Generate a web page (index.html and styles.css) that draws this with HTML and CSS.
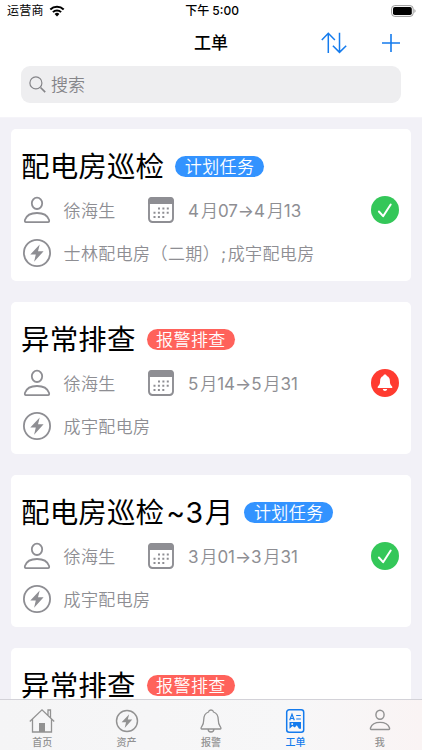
FILE: index.html
```html
<!DOCTYPE html>
<html lang="zh-CN">
<head>
<meta charset="utf-8">
<title>工单</title>
<link rel="stylesheet" href="styles.css">
</head>
<body>
<svg class="sprite" aria-hidden="true">
  <symbol id="person" viewBox="0 0 28 28"><g fill="none" stroke="currentColor" stroke-width="1.8"><ellipse cx="14" cy="7.3" rx="5.2" ry="5.7"/><path d="M3 26.1C1.8 26.1 1.6 25 2 23.8C3.4 19.8 8 17 14 17S24.6 19.8 26 23.8C26.400 25 26.200 26.100 25 26.100Z"/></g></symbol>
  <symbol id="calendar" viewBox="0 0 28 28"><rect x="2" y="2" width="24" height="24" rx="3.400" fill="none" stroke="currentColor" stroke-width="1.900"/><path d="M1.100 8V4.500Q1.100 1.100 5 1.100H23Q26.900 1.100 26.900 4.500V8Z" fill="currentColor"/><path d="M11 12.500H23M6.500 16.800H23M6.500 21.100H18.500" fill="none" stroke="currentColor" stroke-width="2" stroke-dasharray="2 2.400"/></symbol>
  <symbol id="bolt" viewBox="0 0 30 30"><circle cx="15" cy="15" r="13.100" fill="none" stroke="currentColor" stroke-width="1.800"/><path d="M17.700 6.500L8.300 16.500H13.800L12.100 23.800L21.600 13.200H16Z" fill="currentColor"/></symbol>
  <symbol id="check" viewBox="0 0 28 28"><circle cx="14" cy="14" r="14" fill="#34c759"/><path d="M7.900 15.500L12.100 20.200L19.700 8.500" fill="none" stroke="#fff" stroke-width="2" stroke-linecap="round" stroke-linejoin="round"/></symbol>
  <symbol id="alert" viewBox="0 0 28 28"><circle cx="14" cy="14" r="14" fill="#ff3b30"/><path d="M14 5.500C15.200 5.500 15.700 6.200 15.800 7C18 7.800 18.900 9.600 18.900 12C18.900 15.200 19.600 15.900 20.900 17.200C21.800 18.200 21.400 19 20.400 19H7.600C6.600 19 6.200 18.200 7.100 17.200C8.400 15.900 9.100 15.200 9.100 12C9.100 9.600 10 7.800 12.200 7C12.300 6.200 12.800 5.500 14 5.500ZM11.800 20H16.200C16 21.300 15.100 22 14 22S12 21.300 11.800 20Z" fill="#fff"/></symbol>
</svg>
<div class="screen">
  <header class="top">
    <div class="status">
      <div class="carrier"><span>运营商</span>
        <svg width="16" height="12" viewBox="0 0 16 12"><path d="M1.300 4.500A9.500 9.500 0 0 1 14.700 4.500M3.900 7.100A5.900 5.900 0 0 1 12.100 7.100" fill="none" stroke="#000" stroke-width="2"/><path d="M8 11.500L5.600 9A3.400 3.400 0 0 1 10.400 9Z"/></svg>
      </div>
      <span class="time">下午 5:00</span>
      <svg class="battery" width="26" height="12" viewBox="0 0 26 12"><rect x=".6" y=".6" width="21.600" height="10.800" rx="3.200" fill="none" stroke="#9a9a9a"/><rect x="2" y="2" width="18.800" height="8" rx="1.800"/><path d="M23.500 4Q25.500 6 23.500 8Z" fill="#888"/></svg>
    </div>
    <div class="nav">
      <h1>工单</h1>
      <div class="actions">
        <svg width="26" height="22" viewBox="0 0 26 22"><path d="M7.300 21V1.300M.8 8L7.300 1.300L13.900 8M18.500 .7V20.400M11.900 13.700L18.500 20.400L25.200 13.700" fill="none" stroke="currentColor" stroke-width="1.500"/></svg>
        <svg width="18" height="18" viewBox="0 0 18 18"><path d="M9 0V18M0 9H18" fill="none" stroke="currentColor" stroke-width="1.600"/></svg>
      </div>
    </div>
    <div class="search">
      <svg width="17" height="17" viewBox="0 0 17 17"><path d="M11.500 11.500L16.200 16.200" fill="none" stroke="currentColor" stroke-width="1.700"/><circle cx="6.900" cy="6.900" r="6" fill="none" stroke="currentColor" stroke-width="1.200"/></svg>
      <span>搜索</span>
    </div>
  </header>

  <main class="list">
    <article class="card">
      <div class="heading"><h2>配电房巡检</h2><span class="tag plan">计划任务</span></div>
      <div class="row"><svg class="icon"><use href="#person"/></svg><span class="name">徐海生</span><svg class="icon"><use href="#calendar"/></svg><span class="date">4<i>月</i>07→4<i>月</i>13</span><svg class="state"><use href="#check"/></svg></div>
      <div class="row"><svg class="icon power"><use href="#bolt"/></svg><span>士林配电房（二期）<b>;</b>成宇配电房</span></div>
    </article>
    <article class="card">
      <div class="heading"><h2>异常排查</h2><span class="tag alarm">报警排查</span></div>
      <div class="row"><svg class="icon"><use href="#person"/></svg><span class="name">徐海生</span><svg class="icon"><use href="#calendar"/></svg><span class="date">5<i>月</i>14→5<i>月</i>31</span><svg class="state"><use href="#alert"/></svg></div>
      <div class="row"><svg class="icon power"><use href="#bolt"/></svg><span>成宇配电房</span></div>
    </article>
    <article class="card">
      <div class="heading"><h2>配电房巡检<span class="latin">~3</span>月</h2><span class="tag plan">计划任务</span></div>
      <div class="row"><svg class="icon"><use href="#person"/></svg><span class="name">徐海生</span><svg class="icon"><use href="#calendar"/></svg><span class="date">3<i>月</i>01→3<i>月</i>31</span><svg class="state"><use href="#check"/></svg></div>
      <div class="row"><svg class="icon power"><use href="#bolt"/></svg><span>成宇配电房</span></div>
    </article>
    <article class="card">
      <div class="heading"><h2>异常排查</h2><span class="tag alarm">报警排查</span></div>
    </article>
  </main>

  <nav class="tabs">
    <div class="tab"><svg viewBox="0 0 26 26"><path d="M.8 13.500L13 1.800L25.200 13.500M3.500 11V24H22.500V11M19 7.500V2H21.500V10" fill="none" stroke="currentColor" stroke-width="1.300"/><path d="M10 15H16V24H10Z" fill="currentColor"/></svg><span>首页</span></div>
    <div class="tab"><svg class="small"><use href="#bolt"/></svg><span>资产</span></div>
    <div class="tab"><svg viewBox="0 0 26 26"><path d="M13 2C14.500 2 15.300 2.800 15.500 4C19 5.200 20.300 8 20.300 12C20.300 16.500 21.500 17.500 22.500 19C23.300 20.200 23 21 22 21H4C3 21 2.700 20.200 3.500 19C4.500 17.500 5.700 16.500 5.700 12C5.700 8 7 5.200 10.500 4C10.700 2.800 11.500 2 13 2ZM10 21C10.200 25 15.800 25 16 21" fill="none" stroke="currentColor" stroke-width="1.300"/></svg><span>报警</span></div>
    <div class="tab active"><svg viewBox="0 0 26 26"><rect x="4.700" y="1.800" width="17" height="22.400" rx="2.500" fill="none" stroke="currentColor" stroke-width="1.500"/><path d="M7.700 12.300L10 6.200L12.300 12.300M8.400 10.500H11.600M14.200 7.500H18.800M14.200 11H18.800" fill="none" stroke="currentColor" stroke-width="1.200"/><path d="M7.500 14H19V20.800H17L14.800 17.300L12.800 19.500L10.500 18L7.500 20.800Z" fill="currentColor"/><circle cx="10.200" cy="16" r="1" fill="#f7f7f8"/></svg><span>工单</span></div>
    <div class="tab"><svg class="small me"><use href="#person"/></svg><span>我</span></div>
  </nav>
</div>
</body>
</html>
```

FILE: styles.css
```css
* { box-sizing: border-box; }
body { margin: 0; font-family: Inter, "Noto Sans CJK SC", sans-serif; }
h1, h2 { margin: 0; }
i { font-style: normal; }
b { font-weight: 400; margin: 0 1px; }
.sprite { display: none; }
.screen { width: 422px; height: 750px; display: flex; flex-direction: column; overflow: hidden; background: #f2f1f7; }
.top { flex: 0 0 118px; background: #fff; border-bottom: 1px solid #f5f4f9; }

.status { height: 21px; display: grid; grid-template-columns: 1fr auto 1fr; align-items: center; padding: 0 5px 0 7px; font-size: 12px; line-height: 22px; }
.carrier { display: flex; align-items: center; gap: 5px; letter-spacing: .2px; }
.carrier svg { margin-top: -1px; }
.time { font-weight: 500; }
.battery { justify-self: end; }

.nav { height: 45px; display: grid; grid-template-columns: 1fr auto 1fr; align-items: center; padding: 0 23px; }
h1 { grid-column: 2; margin-top: -1px; font-size: 17px; font-weight: 500; line-height: 24px; }
.actions { display: flex; justify-content: flex-end; align-items: center; gap: 35px; margin-right: -.5px; color: #147bed; }
.actions svg { margin-top: -1px; }

.search { height: 37px; margin: 0 21px; padding: 0 7.500px; display: flex; align-items: center; gap: 5.500px; border-radius: 9px; background: #eeeef0; color: #858589; font-size: 17px; }
.search span { line-height: 36px; font-weight: 350; }

.list { flex: 1; min-height: 0; overflow: hidden; padding: 10.500px 11px 0; display: flex; flex-direction: column; gap: 20.500px; }
.card { flex: 0 0 152.500px; padding: 15px 12px 0 10px; border-radius: 5px; background: #fff; }
.heading { height: 45px; display: flex; align-items: center; gap: 11px; }
h2 { font-size: 28.500px; font-weight: 400; line-height: 43px; letter-spacing: .15px; white-space: nowrap; }
.latin { letter-spacing: .7px; margin: 0 1px 0 2px; }
.tag { height: 21px; padding: 0 9.500px; border-radius: 11px; color: #fff; font-size: 17px; font-weight: 350; line-height: 22px; letter-spacing: .4px; }
.plan { background: #3393ff; }
.alarm { background: #ff625b; }
.row { height: 43px; display: flex; align-items: center; padding-left: 1.500px; color: #8e8e93; font-size: 17px; font-weight: 350; letter-spacing: .4px; white-space: nowrap; }
.row span { margin-top: -2px; }
.icon { flex: none; width: 28px; height: 28px; margin-right: 13px; }
.icon.power { width: 30px; height: 30px; margin: 0 12px 0 -1px; }
.name { width: 83.500px; }
.date { font-weight: 400; letter-spacing: -.05px; }
.date i { margin-left: 2px; font-weight: 350; }
.state { width: 28px; height: 28px; margin-left: auto; }

.tabs { flex: 0 0 51px; display: grid; grid-template-columns: repeat(5, 1fr); border-top: 1px solid #d3d2d8; background: linear-gradient(90deg, #f5f5f6, #f7f7f8 70%, #faf4f4); color: #929292; }
.tab { display: flex; flex-direction: column; align-items: center; font-size: 10px; line-height: 14px; font-weight: 500; }
.tab svg { width: 26px; height: 26px; margin-top: 8px; margin-bottom: 1px; }
.tab svg.small { width: 24px; height: 24px; margin: 9px 0 2px; }
.tab svg.me { width: 22px; height: 22px; margin: 9px 0 4px; }
.active { color: #147bed; }
```
